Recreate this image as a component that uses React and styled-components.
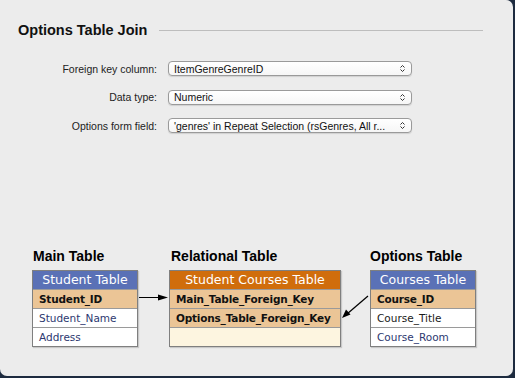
import React from 'react'
import styled, {createGlobalStyle} from 'styled-components'

const GlobalStyle = createGlobalStyle`
  html, body {
    margin: 0;
    padding: 0;
    background: #1d2b3f;
  }
  body {
    font-family: 'Liberation Sans', Arial, sans-serif;
  }
`

const Window = styled.div`
  width: 513px;
  height: 376px;
  background: #ececec;
  border-radius: 0 7px 7px 7px;
  display: flex;
  flex-direction: column;
  overflow: hidden;
`

const TitleRow = styled.div`
  display: flex;
  align-items: center;
  gap: 12px;
  margin: 21px 30px 0 18px;
`

const Title = styled.h2`
  margin: 0;
  font-size: 14.5px;
  font-weight: bold;
  color: #111;
  line-height: 18px;
  white-space: nowrap;
`

const Rule = styled.div`
  flex: 1;
  height: 1px;
  background: #bdbdbd;
  margin-top: 1px;
`

const Form = styled.div`
  display: grid;
  grid-template-columns: 157px 244px;
  column-gap: 11px;
  row-gap: 13.5px;
  margin-top: 22px;
  align-items: center;
`

const Label = styled.label`
  text-align: right;
  font-size: 10.5px;
  color: #222;
`

const Select = styled.div`
  height: 13px;
  border: 1px solid #9a9a9a;
  border-radius: 4px;
  background: linear-gradient(#ffffff, #f6f6f6);
  box-shadow: 0 1px 1px rgba(0, 0, 0, 0.12);
  display: flex;
  align-items: center;
  justify-content: space-between;
  padding: 0 6px 0 5px;
  font-size: 10.5px;
  color: #111;
  white-space: nowrap;
`

const Stepper = () => (
  <svg width="5" height="9" viewBox="0 0 5 9">
    <path d="M0.5 3.5 L2.5 1.5 L4.5 3.5" fill="none" stroke="#333" strokeWidth="1" />
    <path d="M0.5 5.5 L2.5 7.5 L4.5 5.5" fill="none" stroke="#333" strokeWidth="1" />
  </svg>
)

const Diagram = styled.div`
  display: flex;
  align-items: flex-end;
  margin: auto 0 29px 32px;
`

const Group = styled.div`
  display: flex;
  flex-direction: column;
  width: ${p => p.w}px;
`

const Heading = styled.div`
  font-size: 14px;
  font-weight: bold;
  color: #000;
  line-height: 16px;
  margin: 0 0 6px ${p => p.indent || 0}px;
  white-space: nowrap;
`

const Box = styled.div`
  border: 1px solid #7f7f7f;
  box-shadow: 1px 1px 1px rgba(0, 0, 0, 0.15);
  font-family: 'DejaVu Sans', 'Open Sans', sans-serif;
`

const Head = styled.div`
  height: 18px;
  background: ${p => p.color};
  color: #fff;
  font-size: 12.5px;
  line-height: 18px;
  text-align: center;
`

const Row = styled.div`
  height: 18px;
  line-height: 18px;
  border-top: 1px solid #9a9a9a;
  padding-left: 6px;
  font-size: 10.5px;
  background: ${p => (p.kind === 'key' ? '#ebc596' : p.kind === 'empty' ? '#fdf5e0' : '#fff')};
  color: ${p => (p.kind === 'key' ? '#111' : p.dark ? '#1a1a1a' : '#2d3870')};
  font-weight: ${p => (p.kind === 'key' ? 'bold' : 'normal')};
  letter-spacing: ${p => (p.kind === 'key' ? '-0.2px' : '0')};
  white-space: nowrap;
`

const Arrow = styled.svg`
  flex: none;
  display: block;
`

const Table = ({title, color, rows}) => (
  <Box>
    <Head color={color}>{title}</Head>
    {rows.map((r, i) => (
      <Row key={i} kind={r.kind} dark={r.dark}>
        {r.text}
      </Row>
    ))}
  </Box>
)

export default function App() {
  return (
    <>
      <GlobalStyle />
      <Window>
        <TitleRow>
          <Title>Options Table Join</Title>
          <Rule />
        </TitleRow>
        <Form>
          <Label>Foreign key column:</Label>
          <Select>
            <span>ItemGenreGenreID</span>
            <Stepper />
          </Select>
          <Label>Data type:</Label>
          <Select>
            <span>Numeric</span>
            <Stepper />
          </Select>
          <Label>Options form field:</Label>
          <Select>
            <span>'genres' in Repeat Selection (rsGenres, All r...</span>
            <Stepper />
          </Select>
        </Form>
        <Diagram>
          <Group w={106}>
            <Heading indent={1}>Main Table</Heading>
            <Table
              title="Student Table"
              color="#5a71b6"
              rows={[
                {text: 'Student_ID', kind: 'key'},
                {text: 'Student_Name'},
                {text: 'Address'}
              ]}
            />
          </Group>
          <Arrow width="31" height="77" viewBox="0 0 31 77">
            <line x1="1" y1="27.5" x2="25" y2="27.5" stroke="#000" strokeWidth="1.2" />
            <path d="M20 24.5 L30 27.5 L20 30.5 Z" fill="#000" />
          </Arrow>
          <Group w={172}>
            <Heading indent={2}>Relational Table</Heading>
            <Table
              title="Student Courses Table"
              color="#d06d0c"
              rows={[
                {text: 'Main_Table_Foreign_Key', kind: 'key'},
                {text: 'Options_Table_Foreign_Key', kind: 'key'},
                {text: '', kind: 'empty'}
              ]}
            />
          </Group>
          <Arrow width="29" height="77" viewBox="0 0 29 77">
            <line x1="27" y1="26" x2="6" y2="44" stroke="#000" strokeWidth="1.2" />
            <path d="M1 48 L5 39.5 L9.5 44.5 Z" fill="#000" />
          </Arrow>
          <Group w={106}>
            <Heading>Options Table</Heading>
            <Table
              title="Courses Table"
              color="#5a71b6"
              rows={[
                {text: 'Course_ID', kind: 'key'},
                {text: 'Course_Title', dark: true},
                {text: 'Course_Room'}
              ]}
            />
          </Group>
        </Diagram>
      </Window>
    </>
  )
}
